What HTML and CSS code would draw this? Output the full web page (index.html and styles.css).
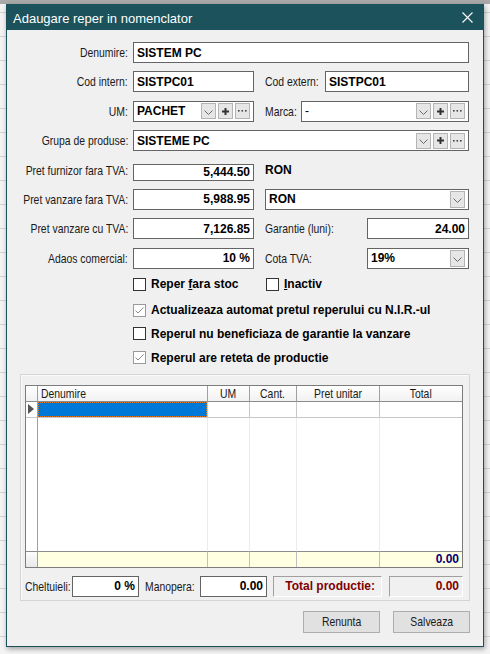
FILE: index.html
```html
<!DOCTYPE html>
<html lang="ro">
<head>
<meta charset="utf-8">
<title>Adaugare reper in nomenclator</title>
<link rel="stylesheet" href="styles.css">
</head>
<body>
<div class="desk">
  <div class="dlg">
    <div class="title">
      <span class="title-text">Adaugare reper in nomenclator</span>
      <svg class="close" width="11" height="11" viewBox="0 0 11 11"><path d="M0.5 0.5L10.5 10.5M10.5 0.5L0.5 10.5" stroke="#fff" stroke-width="1.1"/></svg>
    </div>
    <div class="body">
      <div class="form">
        <div class="row">
          <span class="lbl"><span class="nx">Denumire:</span></span>
          <div class="box grow"><span class="val">SISTEM PC</span></div>
        </div>
        <div class="row">
          <span class="lbl"><span class="nx">Cod intern:</span></span>
          <div class="box w121"><span class="val">SISTPC01</span></div>
          <span class="lbl2 w60"><span class="nx l">Cod extern:</span></span>
          <div class="box grow"><span class="val">SISTPC01</span></div>
        </div>
        <div class="row">
          <span class="lbl"><span class="nx">UM:</span></span>
          <div class="box w121 combo">
            <span class="val">PACHET</span>
            <span class="btn dd"><svg width="9" height="5" viewBox="0 0 9 5"><polyline points="0.5,0.5 4.5,4.5 8.5,0.5" fill="none" stroke="#6a6a6a"/></svg></span>
            <span class="btn"><svg width="7" height="7" viewBox="0 0 7 7"><path d="M3.5 0V7M0 3.5H7" stroke="#333" stroke-width="2"/></svg></span>
            <span class="btn"><svg width="9" height="2" viewBox="0 0 9 2"><rect x="0" y="0" width="1.6" height="1.6" fill="#444"/><rect x="3.5" y="0" width="1.6" height="1.6" fill="#444"/><rect x="7" y="0" width="1.6" height="1.6" fill="#444"/></svg></span>
          </div>
          <span class="lbl2 w36"><span class="nx l">Marca:</span></span>
          <div class="box grow combo">
            <span class="val plain">-</span>
            <span class="btn dd"><svg width="9" height="5" viewBox="0 0 9 5"><polyline points="0.5,0.5 4.5,4.5 8.5,0.5" fill="none" stroke="#6a6a6a"/></svg></span>
            <span class="btn"><svg width="7" height="7" viewBox="0 0 7 7"><path d="M3.5 0V7M0 3.5H7" stroke="#333" stroke-width="2"/></svg></span>
            <span class="btn"><svg width="9" height="2" viewBox="0 0 9 2"><rect x="0" y="0" width="1.6" height="1.6" fill="#444"/><rect x="3.5" y="0" width="1.6" height="1.6" fill="#444"/><rect x="7" y="0" width="1.6" height="1.6" fill="#444"/></svg></span>
          </div>
        </div>
        <div class="row">
          <span class="lbl"><span class="nx">Grupa de produse:</span></span>
          <div class="box grow combo">
            <span class="val">SISTEME PC</span>
            <span class="btn dd"><svg width="9" height="5" viewBox="0 0 9 5"><polyline points="0.5,0.5 4.5,4.5 8.5,0.5" fill="none" stroke="#6a6a6a"/></svg></span>
            <span class="btn"><svg width="7" height="7" viewBox="0 0 7 7"><path d="M3.5 0V7M0 3.5H7" stroke="#333" stroke-width="2"/></svg></span>
            <span class="btn"><svg width="9" height="2" viewBox="0 0 9 2"><rect x="0" y="0" width="1.6" height="1.6" fill="#444"/><rect x="3.5" y="0" width="1.6" height="1.6" fill="#444"/><rect x="7" y="0" width="1.6" height="1.6" fill="#444"/></svg></span>
          </div>
        </div>
        <div class="row">
          <span class="lbl"><span class="nx">Pret furnizor fara TVA:</span></span>
          <div class="box w121 short right"><span class="val">5,444.50</span></div>
          <span class="lbl2 bold">RON</span>
        </div>
        <div class="row">
          <span class="lbl"><span class="nx">Pret vanzare fara TVA:</span></span>
          <div class="box w121 right"><span class="val">5,988.95</span></div>
          <div class="box grow combo ml11">
            <span class="val">RON</span>
            <span class="btn dd tall"><svg width="9" height="5" viewBox="0 0 9 5"><polyline points="0.5,0.5 4.5,4.5 8.5,0.5" fill="none" stroke="#6a6a6a"/></svg></span>
          </div>
        </div>
        <div class="row">
          <span class="lbl"><span class="nx">Pret vanzare cu TVA:</span></span>
          <div class="box w121 right"><span class="val">7,126.85</span></div>
          <span class="lbl2 w102"><span class="nx l">Garantie (luni):</span></span>
          <div class="box grow right"><span class="val">24.00</span></div>
        </div>
        <div class="row">
          <span class="lbl"><span class="nx">Adaos comercial:</span></span>
          <div class="box w121 right"><span class="val">10 %</span></div>
          <span class="lbl2 w102"><span class="nx l">Cota TVA:</span></span>
          <div class="box grow combo">
            <span class="val">19%</span>
            <span class="btn dd tall"><svg width="9" height="5" viewBox="0 0 9 5"><polyline points="0.5,0.5 4.5,4.5 8.5,0.5" fill="none" stroke="#6a6a6a"/></svg></span>
          </div>
        </div>
      </div>

      <div class="checks">
        <div class="crow first">
          <span class="cb"></span><span class="ctext w115">Reper <u>f</u>ara stoc</span>
          <span class="cb"></span><span class="ctext"><u>I</u>nactiv</span>
        </div>
        <div class="crow">
          <span class="cb on"><svg width="11" height="11" viewBox="0 0 11 11"><polyline points="1.5,5.5 4,8 9.5,2.5" fill="none" stroke="#8a8a8a" stroke-width="1"/></svg></span><span class="ctext">Actualizeaza automat pretul reperului cu N.I.R.-ul</span>
        </div>
        <div class="crow">
          <span class="cb"></span><span class="ctext">Reperul nu beneficiaza de garantie la vanzare</span>
        </div>
        <div class="crow">
          <span class="cb on"><svg width="11" height="11" viewBox="0 0 11 11"><polyline points="1.5,5.5 4,8 9.5,2.5" fill="none" stroke="#8a8a8a" stroke-width="1"/></svg></span><span class="ctext">Reperul are reteta de productie</span>
        </div>
      </div>

      <div class="panel">
        <div class="grid">
          <div class="hd ind"></div>
          <div class="hd left"><span class="nx l">Denumire</span></div>
          <div class="hd"><span class="nx c">UM</span></div>
          <div class="hd"><span class="nx c">Cant.</span></div>
          <div class="hd"><span class="nx c">Pret unitar</span></div>
          <div class="hd last"><span class="nx c">Total</span></div>

          <div class="rc ind"><svg width="6" height="10" viewBox="0 0 6 10"><path d="M0 0L6 5L0 10Z" fill="#555"/></svg></div>
          <div class="rc sel"><span class="focus"></span></div>
          <div class="rc"></div>
          <div class="rc"></div>
          <div class="rc"></div>
          <div class="rc last"></div>

          <div class="bc bind"></div>
          <div class="bc"></div>
          <div class="bc"></div>
          <div class="bc"></div>
          <div class="bc"></div>
          <div class="bc last"></div>

          <div class="fc ind"></div>
          <div class="fc"></div>
          <div class="fc"></div>
          <div class="fc"></div>
          <div class="fc"></div>
          <div class="fc last sum">0.00</div>
        </div>
        <div class="totals">
          <span class="tl w47"><span class="nx l">Cheltuieli:</span></span>
          <div class="box w67 right"><span class="val">0 %</span></div>
          <span class="tl w55"><span class="nx l">Manopera:</span></span>
          <div class="box w67 right"><span class="val">0.00</span></div>
          <div class="sunk w109">Total productie:</div>
          <div class="sunk w74">0.00</div>
        </div>
      </div>

      <div class="actions">
        <button class="pb"><span class="nx c">Renunta</span></button>
        <button class="pb"><span class="nx c">Salveaza</span></button>
      </div>
    </div>
  </div>
</div>
</body>
</html>
```
FILE: styles.css
```css
html, body {
  margin: 0;
  padding: 0;
}
body {
  width: 490px;
  height: 654px;
  overflow: hidden;
  background:
    linear-gradient(#a9a9a9 0 4px, transparent 4px),
    repeating-linear-gradient(to bottom, #f3f3f3 0 12px, #d3d3d3 12px 13px, #f3f3f3 13px 24px);
  font-family: "Liberation Sans", Arial, sans-serif;
  font-size: 12px;
  color: #111;
}
.nx {
  display: inline-block;
  flex: none;
  white-space: nowrap;
  font-size: 13px;
  transform: scaleX(0.8);
  transform-origin: right center;
  color: #1a1a1a;
}
.nx.l {
  transform-origin: left center;
}
.nx.c {
  transform-origin: center center;
}
.desk {
  padding: 4px 0 0 6px;
}
.dlg {
  width: 476px;
  height: 641px;
  border: 1px solid #1b4f59;
  background: #f0f0f0;
  box-shadow: 1px 2px 5px rgba(0, 0, 0, 0.35);
  display: flex;
  flex-direction: column;
}
.title {
  height: 25px;
  background: #1b525c;
  color: #fff;
  display: flex;
  align-items: center;
  justify-content: space-between;
  padding: 1px 10px 0 6px;
  font-size: 13px;
  margin-top: -1px;
}
.title-text {
  position: relative;
  top: 1px;
}
.close {
  display: block;
}
.body {
  padding: 12px 14px 0 0;
  display: flex;
  flex-direction: column;
}
.form {
  display: flex;
  flex-direction: column;
  gap: 8.4px;
}
.row {
  display: flex;
  align-items: center;
  height: 21px;
}
.lbl {
  width: 126px;
  flex: none;
  box-sizing: border-box;
  padding-right: 5px;
  display: flex;
  justify-content: flex-end;
  white-space: nowrap;
}
.lbl2 {
  margin-left: 11px;
  flex: none;
  white-space: nowrap;
}
.bold {
  font-weight: bold;
  color: #000;
}
.w60 { width: 60px; }
.w36 { width: 36px; }
.w102 { width: 102px; }
.ml11 { margin-left: 11px; }
.box {
  height: 21px;
  box-sizing: border-box;
  border: 1px solid #646464;
  background: #fff;
  display: flex;
  align-items: center;
  padding: 0 3px;
  flex: none;
}
.box.grow {
  flex: 1;
}
.box.short {
  height: 17px;
  align-self: flex-end;
}
.w121 { width: 121px; }
.w67 { width: 67px; }
.box.right {
  justify-content: flex-end;
}
.val {
  font-weight: bold;
  font-size: 12px;
  color: #000;
  white-space: nowrap;
}
.val.plain {
  font-weight: normal;
}
.combo .val {
  flex: 1;
}
.combo {
  gap: 2px;
  padding-right: 3px;
}
.btn {
  width: 15px;
  height: 16px;
  box-sizing: border-box;
  border: 1px solid #b4b4b4;
  background: #e6e6e6;
  display: flex;
  align-items: center;
  justify-content: center;
  flex: none;
}
.btn.dd svg {
  margin-top: 2px;
}
.btn.tall {
  height: 17px;
}
.checks {
  padding-left: 126px;
  margin-top: 9px;
  display: flex;
  flex-direction: column;
}
.crow {
  display: flex;
  align-items: center;
  height: 13px;
  margin-bottom: 10.7px;
}
.crow.first {
  margin-bottom: 13px;
}
.cb {
  width: 13px;
  height: 13px;
  box-sizing: border-box;
  border: 1px solid #333;
  background: #fff;
  flex: none;
  display: flex;
  align-items: center;
  justify-content: center;
}
.cb.on {
  border-color: #9a9a9a;
}
.ctext {
  margin-left: 5px;
  font-weight: bold;
  font-size: 12px;
  color: #000;
  white-space: nowrap;
}
.ctext.w115 {
  width: 115px;
}
.panel {
  margin: -1px 0 0 13px;
  width: 450px;
  height: 227px;
  box-sizing: border-box;
  border: 1px solid #d4d4d4;
  box-shadow: inset 1px 1px 0 #fafafa;
  padding: 10px 0 0 4px;
}
.grid {
  width: 438px;
  box-sizing: border-box;
  border: 1px solid #7c7c7c;
  display: grid;
  grid-template-columns: 12px 170px 42px 47px 83px 82px;
  grid-template-rows: 16px 16px 133px 16px;
  background: #fff;
}
.hd {
  box-sizing: border-box;
  border-right: 1px solid #a0a0a0;
  border-bottom: 1px solid #8c8c8c;
  background: linear-gradient(#ffffff, #f1f1f1);
  text-align: center;
  line-height: 15px;
  color: #111;
}
.hd.left {
  text-align: left;
  padding-left: 3px;
}
.last {
  border-right: none !important;
}
.rc {
  box-sizing: border-box;
  border-right: 1px solid #c8c8c8;
  border-bottom: 1px solid #c8c8c8;
}
.rc.ind {
  border-right-color: #a0a0a0;
  display: flex;
  align-items: center;
  padding-left: 2px;
}
.rc.sel {
  background: #0078d7;
  position: relative;
}
.focus {
  position: absolute;
  inset: 0;
  border: 1px dotted #e07a1f;
}
.bc {
  box-sizing: border-box;
  border-right: 1px solid #ececec;
}
.bc.bind {
  border-right-color: #a0a0a0;
}
.fc {
  box-sizing: border-box;
  background: #ffffe1;
  border-top: 1px solid #8c8c8c;
  border-right: 1px solid #c0c0c0;
}
.fc.ind {
  background: linear-gradient(#fdfdfd, #e8e8e8);
  border-right-color: #a0a0a0;
}
.fc.sum {
  text-align: right;
  padding-right: 3px;
  font-weight: bold;
  color: #00007a;
  line-height: 15px;
}
.totals {
  display: flex;
  align-items: center;
  height: 21px;
  margin-top: 8px;
}
.tl {
  flex: none;
  white-space: nowrap;
}
.w47 { width: 47px; }
.w55 { width: 55px; margin-left: 6px; }
.sunk {
  height: 21px;
  box-sizing: border-box;
  border: 1px solid #a0a0a0;
  border-right-color: #fff;
  border-bottom-color: #fff;
  background: #f0f0f0;
  color: #800000;
  font-weight: bold;
  text-align: right;
  padding-right: 6px;
  line-height: 19px;
  flex: none;
  white-space: nowrap;
}
.w109 { width: 109px; margin-left: 6px; }
.w74 { width: 74px; margin-left: 7px; padding-right: 3px; }
.actions {
  display: flex;
  justify-content: flex-end;
  gap: 13px;
  margin-top: 10px;
  margin-right: -1px;
}
.pb {
  width: 77px;
  height: 22px;
  border: 1px solid #adadad;
  background: #e1e1e1;
  font-family: "Liberation Sans", Arial, sans-serif;
  font-size: 12px;
  color: #111;
  padding: 0;
}
```
